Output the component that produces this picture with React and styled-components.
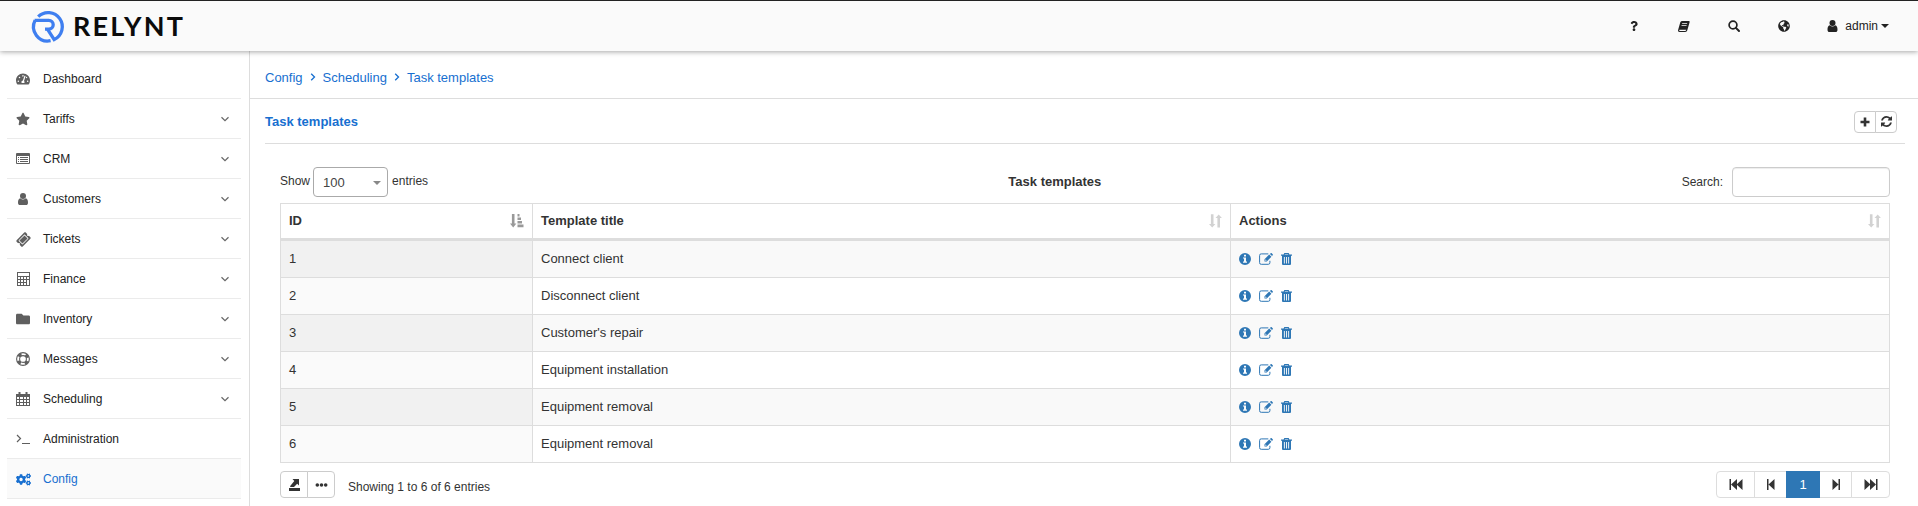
import React from 'react';
import styled, { createGlobalStyle, css } from 'styled-components';
import {
  FaTachometerAlt, FaStar, FaFolder, FaCogs, FaQuestion,
  FaGlobeAmericas, FaTicketAlt,
} from 'react-icons/fa';

const Global = createGlobalStyle`
  * { box-sizing: border-box; }
  body {
    margin: 0;
    background: #fff;
    color: #333;
    font: 13px/18px "Liberation Sans", Arial, sans-serif;
    overflow: hidden;
  }
  svg { display: block; flex: none; overflow: visible; }
`;

const Page = styled.div`
  height: 506px;
  display: flex;
  flex-direction: column;
  overflow: hidden;
`;

const Header = styled.header`
  flex: none;
  height: 51px;
  display: flex;
  justify-content: space-between;
  background: #fafafa;
  border-top: 1px solid #222;
  box-shadow: 0 1px 5px rgba(0, 0, 0, 0.35);
  z-index: 1;
`;

const Brand = styled.div`
  display: flex;
  align-items: center;
  padding: 2px 0 0 32px;
  gap: 9px;
`;

const BrandName = styled.span`
  font: 700 27px/30px Lato, sans-serif;
  letter-spacing: 2.2px;
  color: #0b0b0b;
  padding-bottom: 3px;
`;

const TopNav = styled.nav`
  display: flex;
  align-items: center;
  padding-right: 29px;
  color: #222;
  font-size: 12px;
`;

const TopLink = styled.a`
  width: 50px;
  height: 49px;
  display: flex;
  align-items: center;
  justify-content: center;
`;

const UserMenu = styled.a`
  display: flex;
  align-items: center;
  margin-left: 18px;
  gap: 7px;
`;

const Caret = styled.i`
  border: ${(p) => p.$size || 4}px solid transparent;
  border-top-color: ${(p) => p.$color || '#222'};
  border-bottom: 0;
  margin-left: ${(p) => p.$offset || 0}px;
`;

const Body = styled.div`
  flex: 1;
  display: flex;
  min-height: 0;
`;

const Sidebar = styled.aside`
  flex: none;
  width: 250px;
  border-right: 1px solid #ddd;
  padding: 8px 8px 0 7px;
`;

const MenuItem = styled.a`
  height: 40px;
  display: flex;
  align-items: center;
  padding: 0 12px 0 9px;
  border-bottom: 1px solid #ebebeb;
  font-size: 12px;
  color: ${(p) => (p.$active ? '#176fd0' : '#222')};
  background: ${(p) => (p.$active ? '#fafafa' : 'transparent')};
`;

const MenuIcon = styled.span`
  width: 14px;
  display: flex;
  justify-content: center;
  margin-right: 13px;
  padding-top: 1px;
  color: ${(p) => (p.$active ? '#176fd0' : '#5f5f5f')};
`;

const MenuLabel = styled.span`
  flex: 1;
`;

const Main = styled.main`
  flex: 1;
  min-width: 0;
`;

const Breadcrumb = styled.div`
  height: 48px;
  padding: 6px 15px 0;
  border-bottom: 1px solid #ddd;
  display: flex;
  align-items: center;
  gap: 7px;
  color: #176fd0;
`;

const PanelHead = styled.div`
  height: 45px;
  margin: 0 13px 0 15px;
  padding: 1px 8px 0 0;
  border-bottom: 1px solid #ddd;
  display: flex;
  align-items: center;
  justify-content: space-between;
`;

const PanelTitle = styled.h1`
  margin: 0;
  font-size: 13px;
  color: #176fd0;
`;

const ButtonGroup = styled.div`
  display: flex;
`;

const Button = styled.button`
  width: ${(p) => p.$w}px;
  height: ${(p) => p.$h}px;
  padding: 0;
  display: flex;
  align-items: center;
  justify-content: center;
  border: 1px solid ${(p) => p.$line || '#ccc'};
  background: #fff;
  color: #333;
  font: 13px "Liberation Sans", Arial, sans-serif;
  & + & { margin-left: -1px; }
  &:first-child { border-radius: 4px 0 0 4px; }
  &:last-child { border-radius: 0 4px 4px 0; }
  ${(p) => p.$current && css`
    background: #2e77b5;
    border-color: #2e77b5;
    color: #fff;
    z-index: 1;
  `}
`;

const Content = styled.section`
  padding: 23px 28px 0 30px;
`;

const Controls = styled.div`
  display: flex;
  justify-content: space-between;
  align-items: center;
  height: 30px;
  margin-bottom: 6px;
  font-size: 12px;
`;

const Length = styled.label`
  display: flex;
  align-items: center;
  gap: 4px;
`;

const Select = styled.span`
  width: 75px;
  height: 30px;
  margin-left: -1px;
  padding: 1px 6px 0 9px;
  border: 1px solid #aaa;
  border-radius: 4px;
  display: flex;
  align-items: center;
  justify-content: space-between;
  font-size: 13px;
  color: #444;
`;

const Shift = styled.span`
  padding-bottom: 2px;
`;

const Caption = styled.strong`
  font-size: 13px;
  padding-bottom: 1px;
`;

const Filter = styled.label`
  display: flex;
  align-items: center;
  justify-content: flex-end;
  gap: 9px;
`;

const SearchInput = styled.input`
  width: 158px;
  height: 30px;
  border: 1px solid #ccc;
  border-radius: 4px;
  box-shadow: inset 0 1px 1px rgba(0, 0, 0, 0.075);
  background: #fff;
`;

const Table = styled.table`
  width: 1610px;
  border-collapse: separate;
  border-spacing: 0;
  table-layout: fixed;
  border-top: 1px solid #ddd;
  border-left: 1px solid #ddd;
`;

const Th = styled.th`
  height: 37px;
  width: ${(p) => p.$w}px;
  padding: 0 8px;
  text-align: left;
  border-right: 1px solid #ddd;
  border-bottom: 3px solid #ddd;
`;

const ThInner = styled.div`
  display: flex;
  align-items: center;
  justify-content: space-between;
`;

const Row = styled.tr`
  background: ${(p) => (p.$odd ? '#f9f9f9' : '#fff')};
`;

const Td = styled.td`
  height: 37px;
  padding: 0 8px;
  border-right: 1px solid #ddd;
  border-bottom: 1px solid #ddd;
`;

const IdTd = styled(Td)`
  background: ${(p) => (p.$odd ? '#f1f1f1' : '#fafafa')};
`;

const Actions = styled.div`
  display: flex;
  align-items: center;
  gap: 8px;
  color: #2e77b5;
`;

const Footer = styled.div`
  display: flex;
  justify-content: space-between;
  margin-top: 8px;
`;

const FooterLeft = styled.div`
  display: flex;
  gap: 13px;
  font-size: 12px;
`;

const Info = styled.span`
  padding-top: 7px;
`;

const Svg = ({ w = 14, h = 14, vb, children, ...rest }) => (
  <svg width={w} height={h} viewBox={vb || `0 0 ${w} ${h}`} fill="currentColor" {...rest}>{children}</svg>
);

const Logo = () => (
  <Svg w={32} h={32} fill="none" stroke="#3f7ff0" strokeWidth="3.3">
    <path d="M6.200 5.600A14.200 14.200 0 1 1 22.200 28.600L15.600 18.300" />
    <path d="M2.600 9.300h14.200a4.400 4.400 0 0 1 0 8.800h-3.800" />
    <path d="M3.100 9.300A14.200 14.200 0 0 0 18.600 29.700" />
  </Svg>
);

const ListIcon = () => (
  <Svg w={14} h={12}>
    <path fillRule="evenodd" d="M1 0h12a1 1 0 0 1 1 1v9a1 1 0 0 1-1 1H1a1 1 0 0 1-1-1V1a1 1 0 0 1 1-1zM1 3v7h12V3z" />
    <path d="M2 4h1v1H2zM4 4h8v1H4zM2 6h1v1H2zM4 6h8v1H4zM2 8h1v1H2zM4 8h8v1H4z" />
  </Svg>
);

const UserIcon = ({ w = 10, h = 12 }) => (
  <Svg w={w} h={h} vb="0 0 10 12">
    <circle cx="5" cy="3" r="3" />
    <path d="M2.300 5.300C.6 5.700 0 7.300 0 9.700 0 11.200.8 12 2 12h6c1.200 0 2-.8 2-2.300 0-2.400-.6-4-2.300-4.400a4 4 0 0 1-5.400 0z" />
  </Svg>
);

const BookIcon = () => (
  <Svg w={12} h={11}>
    <path fillRule="evenodd" d="M3.800 0h7a.9.9 0 0 1 .8 1.200L9.300 9.300A2.200 2.200 0 0 1 7.300 11H1.500C.4 11-.2 10 .1 9L2.300 1.300A2 2 0 0 1 3.800 0zM4.300 2.200L4 3.100h5l.3-.9zM3.700 4.200l-.3.900h5l.3-.9zM1.500 8.700c-.5.6-.2 1.300.4 1.300h5.200c.5 0 .8-.3 1-.8l.1-.5z" />
  </Svg>
);

const SearchIcon = () => (
  <Svg w={12} h={12} fill="none" stroke="currentColor">
    <circle cx="5" cy="5" r="3.900" strokeWidth="1.700" />
    <path d="M7.900 7.900L11 11" strokeWidth="2" strokeLinecap="round" />
  </Svg>
);

const CalcIcon = () => (
  <Svg w={13} h={14}>
    <path fillRule="evenodd" d="M0 0h13v14H0zM1 1v3h11V1zM1 5v2h2V5zM4 5v2h2V5zM7 5v2h2V5zM10 5v2h2V5zM1 8v2h2V8zM4 8v2h2V8zM7 8v2h2V8zM1 11v2h2v-2zM4 11v2h2v-2zM7 11v2h2v-2zM10 8v5h2V8z" />
  </Svg>
);

const LifeRingIcon = () => (
  <Svg w={14} h={14} fill="none" stroke="currentColor">
    <circle cx="7" cy="7" r="6.400" strokeWidth="1.100" />
    <circle cx="7" cy="7" r="3.400" strokeWidth="1.100" />
    <circle cx="7" cy="7" r="4.900" strokeWidth="3" strokeDasharray="3.500 4.197" strokeDashoffset="-2.100" />
  </Svg>
);

const CalendarIcon = () => (
  <Svg>
    <path fillRule="evenodd" d="M0 2h14v12H0zM1 5v2h2V5zM4 5v2h3V5zM8 5v2h2V5zM11 5v2h2V5zM1 8v2h2V8zM4 8v2h3V8zM8 8v2h2V8zM11 8v2h2V8zM1 11v2h2v-2zM4 11v2h3v-2zM8 11v2h2v-2zM11 11v2h2v-2z" />
    <path d="M2.500 0h2v3.500h-2zM9.500 0h2v3.500h-2z" />
  </Svg>
);

const TerminalIcon = () => (
  <Svg w={14} h={12} fill="none" stroke="currentColor" strokeWidth="1.200">
    <path d="M1 2l3.500 3.500L1 9M6 10.500h8" />
  </Svg>
);

const ChevronDown = () => (
  <Svg w={8} h={6} fill="none" stroke="#666" strokeWidth="1.200"><path d="M.5 1.200L4 4.600 7.500 1.200" /></Svg>
);

const ChevronRight = () => (
  <Svg w={6} h={10} fill="none" stroke="currentColor" strokeWidth="1.300"><path d="M1.200.8L4.500 4 1.200 7.200" /></Svg>
);

const PlusIcon = () => (
  <Svg w={10} h={10}><path d="M3.700.5h2.600v3.200h3.200v2.600H6.300v3.200H3.700V6.300H.5V3.700h3.200z" /></Svg>
);

const RefreshIcon = () => (
  <Svg w={11} h={11} vb="0 0 1536 1536">
    <path d="M1511 928q0 5-1 7-64 268-268 434.500T764 1536q-146 0-282.500-55T238 1324l-129 129q-19 19-45 19t-45-19-19-45V960q0-26 19-45t45-19h448q26 0 45 19t19 45-19 45l-137 137q71 66 161 102t187 36q134 0 250-65t186-179q11-17 53-117 8-23 30-23h192q13 0 22.500 9.500t9.500 22.500zm25-800v448q0 26-19 45t-45 19h-448q-26 0-45-19t-19-45 19-45l138-138Q969 256 768 256q-134 0-250 65T332 500q-11 17-53 117-8 23-30 23H50q-13 0-22.500-9.500T18 608v-7q65-268 270-434.500T768 0q146 0 284 55.500T1297 212l130-129q19-19 45-19t45 19 19 45z" />
  </Svg>
);

const SortAsc = () => (
  <Svg w={14} h={14} fill="#999">
    <path d="M1.900 0h2.600v9.500H6.400L3.200 13.500 0 9.500H1.900zM7.500 0h2v2.500h-2zM7.500 3.500h3.500V6H7.500zM7.500 7H12v2.500H7.500zM7.500 10.500H13.500v2.700H7.500z" />
  </Svg>
);

const SortBoth = () => (
  <Svg w={13} h={14} fill="#d2d2d2">
    <path d="M1.900 .3h2.600v9.700h1.900L3.200 13.500 0 10h1.900zM8.400 13.500h2.600V4h1.900L9.700.5 6.500 4h1.900z" />
  </Svg>
);

const InfoIcon = () => (
  <Svg w={12} h={12}>
    <path fillRule="evenodd" d="M6 0a6 6 0 1 1 0 12A6 6 0 0 1 6 0zM5 1.800v1.700h2V1.800zM4 4.600v1h1v3H4v1.200h4V8.600H7v-4z" />
  </Svg>
);

const EditIcon = () => (
  <Svg w={14} h={12}>
    <path d="M9.300.9H2.300A1.600 1.600 0 0 0 .6 2.600v7A1.600 1.600 0 0 0 2.300 11.300h7a1.600 1.600 0 0 0 1.600-1.600V7.800" fill="none" stroke="currentColor" strokeWidth="1" />
    <path fillRule="evenodd" d="M10.200 1.600l2.200 2.200-4.600 4.700H5.500V6.300zM10.900 1l.8-.8c.3-.3.700-.3 1 0l1 1c.3.300.3.700 0 1l-.7.800zM6.300 6.800v.9h.9l.4-.4-.9-.9z" />
  </Svg>
);

const TrashIcon = () => (
  <Svg w={11} h={12}>
    <path fillRule="evenodd" d="M3.300 0h4.400l.7 1.600H11v1.200h-1V11a1 1 0 0 1-1 1H2a1 1 0 0 1-1-1V2.800H0V1.600h2.600zM4 .9l-.3.700h3.600L7 .9zM2.900 4v6.500h.9V4zM5.050 4v6.500h.9V4zM7.200 4v6.500h.9V4z" />
  </Svg>
);

const ExportIcon = () => (
  <Svg w={11} h={12}>
    <path d="M0 9h11v3H0zM3.500 0H10v6.500L8.200 4.800 5 8H1.200v-1L5.300 2z" />
  </Svg>
);

const DotsIcon = () => (
  <Svg w={12} h={4}><circle cx="2.300" cy="2" r="1.800" /><circle cx="6.500" cy="2" r="1.800" /><circle cx="10.700" cy="2" r="1.800" /></Svg>
);

const FastIcon = ({ flip }) => (
  <Svg w={14} h={11} transform={flip ? 'scale(-1 1)' : undefined}><path d="M.5 0H2v11H.5zM8 0v11L2 5.500zM13.500 0v11L7.500 5.500z" /></Svg>
);

const StepIcon = ({ flip }) => (
  <Svg w={8} h={11} transform={flip ? 'scale(-1 1)' : undefined}><path d="M0 0h1.500v11H0zM7.500 0v11L1.500 5.500z" /></Svg>
);

const menu = [
  ['Dashboard', <FaTachometerAlt size={14} />],
  ['Tariffs', <FaStar size={14} />, true],
  ['CRM', <ListIcon />, true],
  ['Customers', <UserIcon />, true],
  ['Tickets', <FaTicketAlt size={13} transform="rotate(-45)" />, true],
  ['Finance', <CalcIcon />, true],
  ['Inventory', <FaFolder size={14} />, true],
  ['Messages', <LifeRingIcon />, true],
  ['Scheduling', <CalendarIcon />, true],
  ['Administration', <TerminalIcon />],
  ['Config', <FaCogs size={15} />],
];

const templates = [
  'Connect client', 'Disconnect client', "Customer's repair",
  'Equipment installation', 'Equipment removal', 'Equipment removal',
];

export default function App() {
  return (
    <Page>
      <Global />
      <Header>
        <Brand><Logo /><BrandName>RELYNT</BrandName></Brand>
        <TopNav>
          <TopLink><FaQuestion size={10} /></TopLink>
          <TopLink><BookIcon /></TopLink>
          <TopLink><SearchIcon /></TopLink>
          <TopLink><FaGlobeAmericas size={12} /></TopLink>
          <UserMenu><UserIcon w={11} /><span>admin</span><Caret $size={4.5} $offset={-4} /></UserMenu>
        </TopNav>
      </Header>
      <Body>
        <Sidebar>
          {menu.map(([label, icon, expandable]) => (
            <MenuItem key={label} $active={label === 'Config'}>
              <MenuIcon $active={label === 'Config'}>{icon}</MenuIcon>
              <MenuLabel>{label}</MenuLabel>
              {expandable && <ChevronDown />}
            </MenuItem>
          ))}
        </Sidebar>
        <Main>
          <Breadcrumb>
            <span>Config</span><ChevronRight /><span>Scheduling</span><ChevronRight /><span>Task templates</span>
          </Breadcrumb>
          <PanelHead>
            <PanelTitle>Task templates</PanelTitle>
            <ButtonGroup>
              <Button $w={22} $h={22}><PlusIcon /></Button>
              <Button $w={22} $h={22}><RefreshIcon /></Button>
            </ButtonGroup>
          </PanelHead>
          <Content>
            <Controls>
              <Length>
                <Shift>Show</Shift>
                <Select>100<Caret $color="#888" $size={4.5} /></Select>
                <Shift>entries</Shift>
              </Length>
              <Caption>Task templates</Caption>
              <Filter><span>Search:</span><SearchInput /></Filter>
            </Controls>
            <Table>
              <thead>
                <tr>
                  <Th $w={252}><ThInner>ID<SortAsc /></ThInner></Th>
                  <Th $w={698}><ThInner>Template title<SortBoth /></ThInner></Th>
                  <Th $w={659}><ThInner>Actions<SortBoth /></ThInner></Th>
                </tr>
              </thead>
              <tbody>
                {templates.map((title, i) => (
                  <Row key={i} $odd={i % 2 === 0}>
                    <IdTd $odd={i % 2 === 0}>{i + 1}</IdTd>
                    <Td>{title}</Td>
                    <Td><Actions><InfoIcon /><EditIcon /><TrashIcon /></Actions></Td>
                  </Row>
                ))}
              </tbody>
            </Table>
            <Footer>
              <FooterLeft>
                <ButtonGroup>
                  <Button $w={28} $h={27}><ExportIcon /></Button>
                  <Button $w={28} $h={27}><DotsIcon /></Button>
                </ButtonGroup>
                <Info>Showing 1 to 6 of 6 entries</Info>
              </FooterLeft>
              <ButtonGroup>
                <Button $w={39} $h={27} $line="#ddd"><FastIcon /></Button>
                <Button $w={33} $h={27} $line="#ddd"><StepIcon /></Button>
                <Button $w={34} $h={27} $current>1</Button>
                <Button $w={33} $h={27} $line="#ddd"><StepIcon flip /></Button>
                <Button $w={39} $h={27} $line="#ddd"><FastIcon flip /></Button>
              </ButtonGroup>
            </Footer>
          </Content>
        </Main>
      </Body>
    </Page>
  );
}
